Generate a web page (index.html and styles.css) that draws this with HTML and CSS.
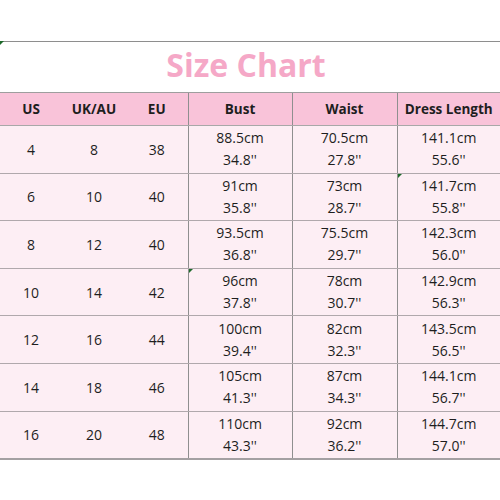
FILE: index.html
```html
<!DOCTYPE html>
<html>
<head>
<meta charset="utf-8">
<link rel="stylesheet" href="styles.css">
</head>
<body>
<div class="sheet">
  <div class="title-row">
    <span class="mark mark-tl"></span>
    <h1 class="title">Size Chart</h1>
  </div>
  <table class="chart">
    <colgroup>
      <col class="c-us"><col class="c-uk"><col class="c-eu"><col class="c-bust"><col class="c-waist"><col class="c-len">
    </colgroup>
    <thead>
      <tr>
        <th>US</th><th>UK/AU</th><th>EU</th><th class="vl">Bust</th><th class="vl">Waist</th><th class="vl">Dress Length</th>
      </tr>
    </thead>
    <tbody>
      <tr><td>4</td><td>8</td><td>38</td><td class="vl"><div class="two"><span>88.5cm</span><span>34.8''</span></div></td><td class="vl"><div class="two"><span>70.5cm</span><span>27.8''</span></div></td><td class="vl"><div class="two"><span>141.1cm</span><span>55.6''</span></div></td></tr>
      <tr><td>6</td><td>10</td><td>40</td><td class="vl"><div class="two"><span>91cm</span><span>35.8''</span></div></td><td class="vl"><div class="two"><span>73cm</span><span>28.7''</span></div></td><td class="vl rel"><span class="mark"></span><div class="two"><span>141.7cm</span><span>55.8''</span></div></td></tr>
      <tr><td>8</td><td>12</td><td>40</td><td class="vl"><div class="two"><span>93.5cm</span><span>36.8''</span></div></td><td class="vl"><div class="two"><span>75.5cm</span><span>29.7''</span></div></td><td class="vl"><div class="two"><span>142.3cm</span><span>56.0''</span></div></td></tr>
      <tr><td>10</td><td>14</td><td>42</td><td class="vl rel"><span class="mark"></span><div class="two"><span>96cm</span><span>37.8''</span></div></td><td class="vl"><div class="two"><span>78cm</span><span>30.7''</span></div></td><td class="vl"><div class="two"><span>142.9cm</span><span>56.3''</span></div></td></tr>
      <tr><td>12</td><td>16</td><td>44</td><td class="vl"><div class="two"><span>100cm</span><span>39.4''</span></div></td><td class="vl"><div class="two"><span>82cm</span><span>32.3''</span></div></td><td class="vl"><div class="two"><span>143.5cm</span><span>56.5''</span></div></td></tr>
      <tr><td>14</td><td>18</td><td>46</td><td class="vl"><div class="two"><span>105cm</span><span>41.3''</span></div></td><td class="vl"><div class="two"><span>87cm</span><span>34.3''</span></div></td><td class="vl"><div class="two"><span>144.1cm</span><span>56.7''</span></div></td></tr>
      <tr><td>16</td><td>20</td><td>48</td><td class="vl"><div class="two"><span>110cm</span><span>43.3''</span></div></td><td class="vl"><div class="two"><span>92cm</span><span>36.2''</span></div></td><td class="vl"><div class="two"><span>144.7cm</span><span>57.0''</span></div></td></tr>
    </tbody>
  </table>
</div>
</body>
</html>
```
FILE: styles.css
```css
html, body {
  margin: 0;
  padding: 0;
  background: #ffffff;
}
body {
  font-family: "Open Sans", "Liberation Sans", sans-serif;
  color: #1e1e1e;
  width: 500px;
  height: 500px;
  overflow: hidden;
}
.sheet {
  padding-top: 41px;
}
.title-row {
  position: relative;
  border-top: 1px solid #8e8e8e;
  height: 50px;
  display: flex;
  justify-content: center;
  align-items: flex-start;
}
.title {
  margin: 0;
  padding-top: 2px;
  padding-right: 8px;
  font-size: 32px;
  font-weight: 700;
  line-height: 42px;
  color: #f5a8c7;
  letter-spacing: 0;
}
.mark {
  position: absolute;
  top: 0;
  left: 0;
  width: 0;
  height: 0;
  border-top: 4px solid #1d6a2a;
  border-right: 4px solid transparent;
}
.mark-tl {
  top: -1px;
}
.chart {
  width: 500px;
  border-collapse: collapse;
  table-layout: fixed;
}
.c-us { width: 62px; }
.c-uk { width: 64px; }
.c-eu { width: 62px; }
.c-bust { width: 104px; }
.c-waist { width: 105px; }
.c-len { width: 103px; }
.chart th {
  background: #f9c3d9;
  height: 32px;
  padding: 0;
  font-size: 13.5px;
  font-weight: 700;
  text-align: center;
  border-top: 1px solid #9e9e9e;
  border-bottom: 1px solid #a8a8a8;
}
.chart td {
  background: #fdeef4;
  height: 46.6px;
  padding: 0;
  font-size: 14px;
  text-align: center;
  vertical-align: middle;
  border-bottom: 1px solid #b0a8ac;
}
.chart tbody tr:last-child td {
  border-bottom: 2px solid #a4a0a2;
}
.chart .vl {
  border-left: 1px solid #8f8f8f;
}
.rel {
  position: relative;
}
.two {
  display: flex;
  flex-direction: column;
  align-items: center;
  line-height: 22px;
}
```
